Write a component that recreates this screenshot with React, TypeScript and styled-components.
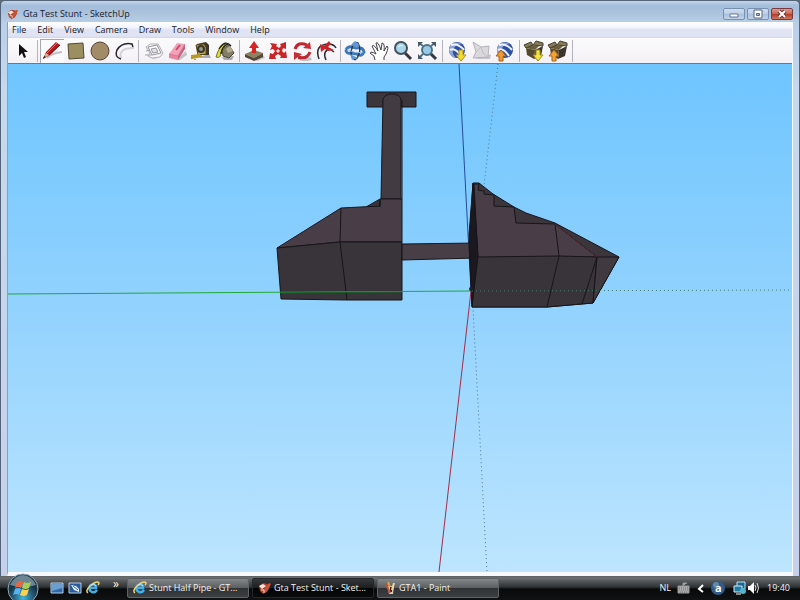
import React from "react";
import styled, { createGlobalStyle } from "styled-components";

const Global = createGlobalStyle`
  *, *::before, *::after { box-sizing: border-box; }
  html, body, #root { height: 100%; }
  body { margin: 0; overflow: hidden; background: #5f6b78; font-family: "Open Sans", "Noto Sans", sans-serif; }
  button { font: inherit; padding: 0; border: 0; background: none; color: inherit; }
`;

const Desktop = styled.div`
  display: flex;
  flex-direction: column;
  height: 100vh;
`;

const WindowFrame = styled.section`
  flex: 1;
  min-height: 0;
  display: flex;
  flex-direction: column;
  padding: 0 6px;
  border: 1px solid #53647a;
  border-bottom: 0;
  border-radius: 5px 5px 0 0;
  background: linear-gradient(to bottom, #c3d5e9 0, #a3bcda 5px, #acc3de 12px, #b9cfe8 22px, #c6d9ed 90px, #c6d0ea 100%);
`;

const TitleBar = styled.header`
  display: flex;
  align-items: center;
  height: 21px;
  gap: 4px;
  padding-top: 4px;
  color: #15202e;
  font-size: 9px;
  line-height: 14px;
`;

const Title = styled.h1`
  flex: 1;
  margin: 0;
  font: inherit;
`;

const WindowButtons = styled.div`
  display: flex;
  gap: 2px;
`;

const WindowButton = styled.button<{ $close?: boolean }>`
  display: flex;
  width: 22px;
  height: 12px;
  border: 1px solid ${(p) => (p.$close ? "#7a3b40" : "#7890b0")};
  border-radius: 2px;
  background: ${(p) =>
    p.$close
      ? "linear-gradient(#dc9c90, #c96a58 45%, #b03a26 50%, #d07860)"
      : "linear-gradient(#d0def0, #bccee6 45%, #a8bfdc 50%, #c0d4ea)"};
`;

const Client = styled.div`
  flex: 1;
  min-height: 0;
  display: flex;
  flex-direction: column;
  border: 1px solid #f7f9ff;
  border-width: 0 1px 4px;
  border-left-color: #8aa0b8;
`;

const MenuBar = styled.nav`
  display: flex;
  align-items: center;
  height: 16px;
  gap: 11px;
  padding: 0 4px;
  background: linear-gradient(#ffffff 0, #f4f6fd 5px, #e0e3f4 8px, #dfe3f5 14px, #d2d5e2 16px);
  color: #1a1a26;
  font-size: 9px;
  line-height: 14px;
`;

const ToolBar = styled.div`
  display: flex;
  align-items: center;
  height: 26px;
  padding-left: 2px;
  background: linear-gradient(#fbfafb, #f4f1f6);
  border-bottom: 1px solid #667b91;
`;

const Tool = styled.button<{ $active?: boolean }>`
  width: 24px;
  height: 24px;
  background: ${(p) => (p.$active ? "#faf9fc" : "transparent")};
  box-shadow: ${(p) => (p.$active ? "inset 1px 1px #a8a6b0" : "none")};
  svg { display: block; width: 24px; height: 24px; }
`;

const Divider = styled.i<{ $wide?: boolean }>`
  width: 1px;
  height: 22px;
  margin: 0 2px 0 ${(p) => (p.$wide ? 3 : 2)}px;
  background: #b4b2bb;
`;

const Viewport = styled.main`
  flex: 1;
  min-height: 0;
  background: linear-gradient(#6ec5ff, #94d3fe 50%, #bde5ff);
  svg { display: block; width: 100%; height: 100%; }
`;

const TaskBar = styled.footer`
  display: flex;
  align-items: center;
  height: 24px;
  padding: 0 10px 0 6px;
  color: #f2f2f2;
  font-size: 9px;
  line-height: 14px;
  background: linear-gradient(#5e6164 0, #6d7073 2px, #54575a 5px, #303335 11px, #08090a 13px, #101214 24px);
`;

const Start = styled.button`
  width: 34px;
  height: 24px;
  svg { display: block; width: 34px; height: 24px; overflow: visible; }
`;

const QuickLaunch = styled.div`
  display: flex;
  align-items: center;
  gap: 4px;
  margin-left: 10px;
  svg { display: block; width: 14px; height: 14px; }
`;

const More = styled.button`
  width: 12px;
  margin: 0 5px 8px 10px;
  font-size: 12px;
`;

const Tasks = styled.div`
  flex: 1;
  display: flex;
  gap: 3px;
`;

const Task = styled.button<{ $active?: boolean }>`
  display: flex;
  align-items: center;
  gap: 2px;
  width: 122px;
  height: 20px;
  padding-left: 5px;
  white-space: nowrap;
  border: 1px solid ${(p) => (p.$active ? "#25272a" : "#606366")};
  border-radius: 2px;
  background: ${(p) =>
    p.$active
      ? "linear-gradient(#35373a, #1c1e20 48%, #020303 50%, #0a0b0c)"
      : "linear-gradient(#85888a, #5c5f61 48%, #303335 50%, #3c3f41)"};
  svg { flex: none; width: 14px; height: 14px; }
`;

const Tray = styled.div`
  display: flex;
  align-items: center;
  gap: 6px;
  svg { display: block; height: 14px; }
`;

const Devices = styled.div`
  display: flex;
  align-items: center;
  gap: 1px;
  margin-left: 2px;
`;

const Clock = styled.time`
  margin-left: 1px;
`;

const S = ({ children }: { children: React.ReactNode }) => (
  <svg viewBox="0 0 24 24" aria-hidden="true">{children}</svg>
);

const shadow = "#c3c1c8";

const Globe = () => (
  <>
    <circle cx="12" cy="11" r="8" fill="#2d4fa3" />
    <path d="M5 7Q10 1 17 5Q10 5 8 11Q7 15 11 19Q3 17 4 9z" fill="#8aa3d8" />
    <path d="M6 6Q13 4 19 11M5 11Q10 8 16 17" fill="none" stroke="#f1f5ff" strokeWidth="2" />
  </>
);

const Box = () => (
  <>
    <path d="M4 9L13 11L12 20L5 16z" fill="#55492f" />
    <path d="M13 11L21 7L19 17L12 20z" fill="#39352c" />
    <path d="M4 9L8 6L17 7L13 11z" fill="#6b5e3c" />
    <path d="M4 9L2 6L9 3L11 6zM11 6L14 2L21 4L21 7z" fill="#857a5a" stroke="#45402f" />
  </>
);

const icons: Record<string, React.ReactNode> = {
  Select: <path d="M9 5V17L12 14L14 19L16 18L14 13H18z" fill="#111" />,
  Line: (
    <>
      <path d="M7 19Q12 14 22 13" fill="none" stroke={shadow} strokeWidth="2" />
      <path d="M3 20L6 13L16 3L20 6L10 16z" fill="#b21d20" />
      <path d="M7 14L17 4" stroke="#e76b61" />
      <path d="M9 16L20 6" stroke="#5d0d12" />
      <path d="M3 20L6 14L9 16z" fill="#d9b08a" />
      <path d="M3 20L4 17L6 18z" fill="#222" />
    </>
  ),
  Rectangle: <path d="M4 5L19 4L20 19L5 20z" fill="#9b8f61" stroke="#514b32" />,
  Circle: <circle cx="12" cy="12" r="9" fill="#a28c68" stroke="#514535" />,
  Arc: (
    <>
      <path d="M9 19Q6 9 22 9" fill="none" stroke="#d4d2d8" strokeWidth="2" />
      <path d="M9 20Q2 18 5 11Q10 3 20 5L21 8" fill="none" stroke="#24272e" strokeWidth="1.5" />
    </>
  ),
  Component: (
    <>
      <path d="M6 16L13 21L22 16L20 13L10 17z" fill="#dddbe1" />
      <path d="M5 8L9 5H17L22 14L19 18L11 19L7 17L9 14z" fill="#f6f5f8" stroke="#b2b0b9" />
      <path d="M7 8L16 6L20 14L11 16z" fill="#fff" stroke="#93919b" />
      <path d="M10 10L15 9L17 13L12 14z" fill="#e4e2e8" stroke="#9a98a2" />
      <path d="M5 12L9 11M4 16L11 16" stroke="#a5a3ac" />
    </>
  ),
  Eraser: (
    <>
      <path d="M11 21L21 12L22 16L15 21z" fill={shadow} />
      <path d="M4 15L12 4L20 5L13 17z" fill="#f3a3b8" />
      <path d="M4 15L13 17V21L4 19z" fill="#e984a0" />
      <path d="M13 17L20 5V10L13 21z" fill="#c9607e" />
      <path d="M4 15L13 17L20 5" fill="none" stroke="#d6758f" />
      <path d="M11 11L15 6" stroke="#c14c70" strokeWidth="2" />
    </>
  ),
  Tape: (
    <>
      <path d="M10 18L20 15L22 19H11z" fill="#aaa8b2" />
      <path d="M8 5L17 3L20 6V16L9 16z" fill="#393529" />
      <path d="M7 6L15 5L17 8V15L9 16z" fill="#c9a83c" stroke="#584a20" />
      <circle cx="12" cy="10" r="4" fill="#39372b" />
      <circle cx="12" cy="10" r="2" fill="#9b978a" />
      <path d="M11 16L3 17V19L13 17M6 16V21" fill="none" stroke="#b99a24" strokeWidth="2" />
    </>
  ),
  Paint: (
    <>
      <path d="M9 18L21 17L19 21H11z" fill="#aaa8b1" />
      <path d="M9 10L16 6L21 14L16 19L10 17z" fill="#837d66" stroke="#4a483b" />
      <path d="M13 10L17 7L20 12L15 14z" fill="#b4ad94" />
      <path d="M13 5Q6 6 3 18Q8 20 8 13Q10 12 12 8" fill="#ded843" stroke="#77762d" />
      <path d="M6 10Q12 0 18 7M8 15Q9 7 15 5" fill="none" stroke="#26271f" strokeWidth="1.4" />
    </>
  ),
  PushPull: (
    <>
      <path d="M12 21L21 16L23 19L15 22z" fill={shadow} />
      <path d="M3 15L12 11L21 14L12 19z" fill="#8d8060" />
      <path d="M3 15L12 19V22L3 18zM12 19L21 14V18L12 22z" fill="#544733" />
      <path d="M10 14V9H7L12 2L17 9H14V14z" fill="#d62524" />
    </>
  ),
  Move: (
    <>
      <path d="M4 4L11 5L10 7L13 9L15 7L14 5L20 3L20 10L17 9L16 12L18 14L20 12L21 19L14 19L15 17L12 15L9 17L10 20L3 20L4 14L7 15L9 12L7 10L4 11L6 7z" fill="#c92426" />
      <path d="M12 10L14 12L12 14L10 12z" fill="#f7e5e6" />
    </>
  ),
  Rotate: (
    <>
      <ellipse cx="15" cy="20" rx="7" ry="2" fill={shadow} />
      <path d="M5 10Q8 2 17 6M20 13Q17 21 8 18" fill="none" stroke="#bd2730" strokeWidth="3" />
      <path d="M20 3L21 10L13 9zM4 13L12 15L4 21z" fill="#c92b32" />
    </>
  ),
  Offset: (
    <>
      <path d="M5 20Q0 6 14 5Q20 5 22 9M12 21Q8 12 16 10L20 13" fill="none" stroke="#292c34" strokeWidth="1.5" />
      <path d="M7 13L6 5L10 7L15 2L17 5L14 8L20 11L14 12L11 10z" fill="#ca2329" />
    </>
  ),
  Orbit: (
    <>
      <path d="M3 11Q5 7 9 8L13 9Q20 8 21 13Q19 18 14 15L8 14Q3 15 3 11" fill="none" stroke="#3c78bd" strokeWidth="3" />
      <path d="M12 21Q6 17 9 9Q10 2 15 4Q18 9 16 15Q15 19 12 21" fill="none" stroke="#293747" strokeWidth="1.4" />
      <path d="M8 6L12 2L16 5L14 9zM7 15L15 19L9 21z" fill="#5e98d4" />
      <path d="M4 10Q12 15 20 13" fill="none" stroke="#8fbbe5" />
    </>
  ),
  Pan: (
    <path d="M8 21L7 17L3 14Q4 12 9 15L5 7Q7 5 11 12L9 4Q11 2 14 11L15 4Q18 4 17 12L20 7Q22 8 19 15L17 18V21" fill="#fff" stroke="#42424a" />
  ),
  Zoom: (
    <>
      <path d="M14 14L20 20" stroke="#35363d" strokeWidth="3" />
      <circle cx="10" cy="9" r="6" fill="#a9d7e7" stroke="#42515d" strokeWidth="2" />
      <path d="M7 8Q9 5 12 7" fill="none" stroke="#e5fbff" />
    </>
  ),
  Extents: (
    <>
      <path d="M4 4L8 7M20 4L16 7M4 19L8 15" stroke="#537187" strokeWidth="2" />
      <path d="M3 3H8L3 8zM21 3V8L16 3zM3 20V15L8 20z" fill="#455966" />
      <path d="M15 14L21 20" stroke="#303844" strokeWidth="3" />
      <circle cx="12" cy="11" r="5" fill="#97cae6" stroke="#4a7187" strokeWidth="2" />
    </>
  ),
  "Get Current View": (
    <>
      <Globe />
      <path d="M14 11H18V16H21L16 22L11 16H14z" fill="#f4dc2e" stroke="#aa8d1b" />
    </>
  ),
  Terrain: (
    <>
      <path d="M6 20L21 20L22 16L16 15z" fill="#c5c3ca" />
      <path d="M4 3L12 8L20 7L19 18L4 19L7 13z" fill="#dad8dd" stroke="#b5b3bb" />
      <path d="M7 13L12 8L14 14L19 18" fill="none" stroke="#c3c1c8" />
    </>
  ),
  "Place Model": (
    <>
      <Globe />
      <path d="M6 22V17H3L8 11L13 17H10V22z" fill="#f09a2d" stroke="#a8601c" />
    </>
  ),
  "Get Models": (
    <>
      <Box />
      <path d="M14 11H18V16H21L16 22L11 16H14z" fill="#f5e43f" stroke="#9c8a20" />
    </>
  ),
  "Share Model": (
    <>
      <Box />
      <path d="M6 22V17H3L8 11L13 17H10V22z" fill="#f4a336" stroke="#a8641c" />
    </>
  ),
};

const groups = [
  ["Select"],
  ["Line", "Rectangle", "Circle", "Arc"],
  ["Component", "Eraser", "Tape", "Paint"],
  ["PushPull", "Move", "Rotate", "Offset"],
  ["Orbit", "Pan", "Zoom", "Extents"],
  ["Get Current View", "Terrain", "Place Model"],
  ["Get Models", "Share Model"],
];

const SketchIcon = () => (
  <svg width="12" height="12" viewBox="0 0 14 14" aria-hidden="true">
    <path d="M1 5L5 2L10 3L12 6L9 11L5 13L2 10z" fill="#a94231" />
    <path d="M1 5L5 3L8 5L4 8z" fill="#f5e4d6" />
    <path d="M5 10L11 2L13 3L8 11z" fill="#c95433" />
    <path d="M3 9L6 9L6 12" fill="none" stroke="#f8d9c6" />
  </svg>
);

const Explorer = () => (
  <svg viewBox="0 0 14 14" aria-hidden="true">
    <path d="M11 9Q9 12 6 11Q2 9 4 5Q7 2 10 5L10 7H4" fill="none" stroke="#42afe8" strokeWidth="2.5" />
    <path d="M2 12Q-1 10 4 5Q11 -1 13 2Q13 3 12 4" fill="none" stroke="#efd372" strokeWidth="1.5" />
    <path d="M5 4Q8 2 10 5" fill="none" stroke="#b9eafa" />
  </svg>
);

const PaintIcon = () => (
  <svg viewBox="0 0 14 14" aria-hidden="true">
    <path d="M4 5H11L10 13H6z" fill="#d8cbc0" />
    <path d="M7 6L9 6L9 11L7 11z" fill="#4a2320" />
    <path d="M3 3L7 12" stroke="#b8573c" strokeWidth="2" />
    <path d="M11 2L9 9" stroke="#eed79a" strokeWidth="2" />
    <path d="M5 1L7 6" stroke="#d9a348" strokeWidth="2" />
  </svg>
);

const Model = () => (
  <svg viewBox="8 64 784 508" preserveAspectRatio="xMidYMid slice" role="img" aria-label="3D stunt ramp model">
    <path d="M459 64L471 290" stroke="#234b9e" fill="none" />
    <path d="M498 64L472 290L487 572" stroke="#507889" strokeDasharray="1 3" fill="none" />
    <g stroke="#17151a" strokeLinejoin="round">
      <path d="M367 92H416V107H367z" fill="#3c353c" />
      <path d="M381 199L383 99Q385 94 392 94Q400 94 401 100V199z" fill="#433b42" />
      <path d="M366 207L380 199V207z" fill="#39343a" />
      <path d="M277 248L341 208L380 206V199H402V242H340z" fill="#493e47" />
      <path d="M277 248L340 242H402V300H347L281 299z" fill="#39333a" />
      <path d="M341 208L340 242L347 300M380 199V207" fill="none" />
      <path d="M402 244L476 243V258L402 260z" fill="#483e45" />
      <path d="M473 183L479 183L493 194L514 207L526 213L555 223L619 257L593 303L547 307H472L469 245z" fill="#3c363c" />
      <path d="M474 184L479 184L478 190L484 191V194L494 195V206L514 207L516 223L555 224L597 257L478 258z" fill="#493e47" />
      <path d="M477 257L559 256L597 257L593 303L547 307H472z" fill="#39333a" />
      <path d="M597 257L619 257L593 303z" fill="#40393f" />
      <path d="M473 183L469 235L472 306L478 257z" fill="#1b191f" />
      <path d="M555 224L559 256L547 307M597 257L582 304" fill="none" />
      <path d="M555 224L597 257" fill="none" stroke="#53272d" />
      <path d="M402 100V199" />
    </g>
    <path d="M8 294L471 291" stroke="#22a83a" fill="none" />
    <path d="M281 293L402 292" stroke="#17602b" fill="none" />
    <path d="M472 291L792 290" stroke="#427c68" strokeDasharray="1 3" fill="none" />
    <path d="M471 291L439 572" stroke="#a52c48" fill="none" />
    <circle cx="471" cy="289" r="2" fill="#20202a" />
  </svg>
);

export default function App() {
  return (
    <Desktop>
      <Global />
      <WindowFrame>
        <TitleBar>
          <SketchIcon />
          <Title>Gta Test Stunt - SketchUp</Title>
          <WindowButtons>
            <WindowButton aria-label="Minimize">
              <svg width="20" height="10" viewBox="0 0 20 10"><path d="M6 5H14V8H6z" fill="#fff" stroke="#647792" /></svg>
            </WindowButton>
            <WindowButton aria-label="Restore">
              <svg width="20" height="10" viewBox="0 0 20 10"><path d="M6 1H14V9H6z" fill="#fff" stroke="#536780" /><path d="M8.5 4.5H11.5V6.5H8.5z" fill="#a9bdd8" stroke="#536780" /></svg>
            </WindowButton>
            <WindowButton $close aria-label="Close">
              <svg width="20" height="10" viewBox="0 0 20 10"><path d="M7 2L13 8M13 2L7 8" stroke="#70302c" strokeWidth="4" /><path d="M7 2L13 8M13 2L7 8" stroke="#fff" strokeWidth="2" /></svg>
            </WindowButton>
          </WindowButtons>
        </TitleBar>
        <Client>
          <MenuBar>
            {["File", "Edit", "View", "Camera", "Draw", "Tools", "Window", "Help"].map((m) => (
              <button key={m}>{m}</button>
            ))}
          </MenuBar>
          <ToolBar>
            {groups.map((g, i) => (
              <React.Fragment key={g[0]}>
                {g.map((name) => (
                  <Tool key={name} $active={name === "Line"} aria-label={name}><S>{icons[name]}</S></Tool>
                ))}
                <Divider $wide={i === 0 || i === 4} />
              </React.Fragment>
            ))}
          </ToolBar>
          <Viewport><Model /></Viewport>
        </Client>
      </WindowFrame>
      <TaskBar>
        <Start aria-label="Start">
          <svg viewBox="0 0 34 24">
            <defs>
              <radialGradient id="orb" cx="50%" cy="80%"><stop offset="0" stopColor="#42b8d8" /><stop offset="0.6" stopColor="#286383" /><stop offset="1" stopColor="#183447" /></radialGradient>
            </defs>
            <circle cx="17" cy="13" r="15" fill="url(#orb)" stroke="#91a8b2" />
            <path d="M4 9Q9 -1 17 -1Q26 0 30 9Q18 13 4 9" fill="#a6bcc5" opacity="0.6" />
            <path d="M11 6Q14 4 17 6L15 12Q12 10 9 12z" fill="#ec6440" />
            <path d="M18 6Q21 8 25 6L23 12Q20 14 16 12z" fill="#a9ce54" />
            <path d="M9 13Q12 11 15 13L13 19Q10 17 7 19z" fill="#55b3ed" />
            <path d="M16 13Q20 15 23 13L21 19Q18 21 14 19z" fill="#fbcf4f" />
          </svg>
        </Start>
        <QuickLaunch>
          <button aria-label="Show desktop"><svg viewBox="0 0 14 14"><path d="M1 2H13V12H1z" fill="#3269ad" stroke="#b5cee4" /><path d="M2 3H12V7L2 10z" fill="#6c9fd1" /></svg></button>
          <button aria-label="Switch windows"><svg viewBox="0 0 14 14"><path d="M1 2H13V12H1z" fill="#2b5b98" stroke="#b5cee4" /><path d="M3 4L8 5L11 8V11L6 9z" fill="#e7f4ff" /><path d="M5 5L10 9" stroke="#2d67a7" /></svg></button>
          <button aria-label="Internet Explorer"><Explorer /></button>
        </QuickLaunch>
        <More aria-label="More">»</More>
        <Tasks>
          <Task><Explorer />Stunt Half Pipe - GT...</Task>
          <Task $active><SketchIcon />Gta Test Stunt - Sket...</Task>
          <Task><PaintIcon />GTA1 - Paint</Task>
        </Tasks>
        <Tray>
          <span>NL</span>
          <svg width="13" viewBox="0 0 13 14" aria-label="Keyboard"><path d="M1 5H12V12H1zM6 5V2H10" fill="#aaa" stroke="#999" /><path d="M2 7H11M2 9H11M3 11H10" stroke="#777" strokeDasharray="1 1" /></svg>
          <svg width="9" viewBox="0 0 9 14" aria-label="Show hidden icons"><path d="M7 4L3 8L7 11" fill="none" stroke="#fff" strokeWidth="2" /></svg>
          <svg width="14" viewBox="0 0 14 14" aria-label="Avast"><circle cx="7" cy="7" r="7" fill="#315c88" /><circle cx="5" cy="4" r="3" fill="#6589aa" /><text x="4" y="11" fill="#fff" fontSize="11" fontWeight="700">a</text></svg>
          <Devices>
            <svg width="14" viewBox="0 0 14 14" aria-label="Network"><path d="M4 1H12V8H4z" fill="#1b6695" stroke="#bde3f2" /><path d="M1 5H9V11H1z" fill="#217ba9" stroke="#d3edf6" /><circle cx="10" cy="10" r="3" fill="#54b3cf" /><path d="M3 13H8" stroke="#fff" /></svg>
            <svg width="12" viewBox="0 0 12 14" aria-label="Volume"><path d="M0 5H2L6 1V13L2 9H0z" fill="#fff" /><path d="M7 4Q9 7 7 10M9 2Q12 7 9 12" fill="none" stroke="#ddd" /></svg>
          </Devices>
          <Clock>19:40</Clock>
        </Tray>
      </TaskBar>
    </Desktop>
  );
}
